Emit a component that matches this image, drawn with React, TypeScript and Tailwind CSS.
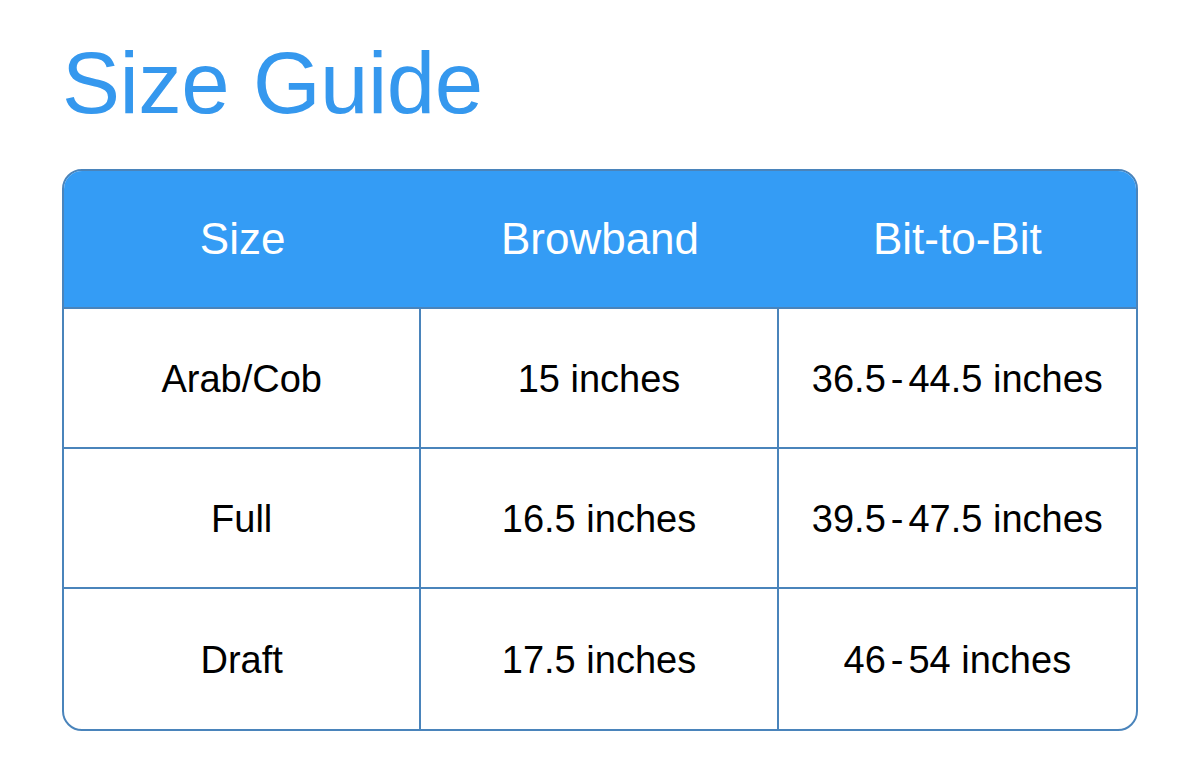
import React from "react";

const headers = ["Size", "Browband", "Bit-to-Bit"];

const rows = [
  { size: "Arab/Cob", browband: "15 inches", from: "36.5", to: "44.5" },
  { size: "Full", browband: "16.5 inches", from: "39.5", to: "47.5" },
  { size: "Draft", browband: "17.5 inches", from: "46", to: "54" },
];

const Range = ({ from, to }: { from: string; to: string }) => (
  <span>
    {from}
    <span className="mx-[5px]">-</span>
    {to} inches
  </span>
);

const App = () => {
  return (
    <div
      className="w-[1200px] h-[779px] bg-white px-[62px] pt-[39px]"
      style={{ fontFamily: '"Liberation Sans", Arial, sans-serif' }}
    >
      <h1 className="text-[87px] leading-none text-[#3598ee] tracking-[-0.5px] h-[130px]">
        Size Guide
      </h1>
      <div className="w-[1076px] rounded-[20px] border-2 border-[#4a84bb] overflow-hidden">
        <div className="grid grid-cols-3 h-[138px] bg-[#349cf5] border-b-2 border-[#4a84bb]">
          {headers.map((h) => (
            <div
              key={h}
              className="flex items-center justify-center text-white text-[44px]"
            >
              {h}
            </div>
          ))}
        </div>
        {rows.map((r, i) => (
          <div
            key={r.size}
            className={`grid grid-cols-3 h-[140px] text-[38px] text-black ${
              i < rows.length - 1 ? "border-b-2 border-[#4a84bb]" : ""
            }`}
          >
            <div className="flex items-center justify-center pt-[3px] border-r-2 border-[#4a84bb]">
              {r.size}
            </div>
            <div className="flex items-center justify-center pt-[3px] border-r-2 border-[#4a84bb]">
              {r.browband}
            </div>
            <div className="flex items-center justify-center pt-[3px]">
              <Range from={r.from} to={r.to} />
            </div>
          </div>
        ))}
      </div>
    </div>
  );
};

export default App;
